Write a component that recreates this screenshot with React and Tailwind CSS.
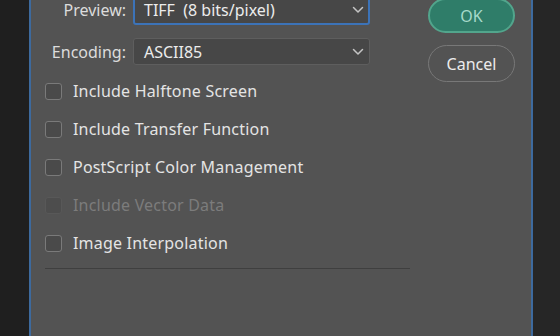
import React from 'react';

const Chevron = ({ className = '' }) => (
  <svg width="12" height="8" viewBox="0 0 12 8" fill="none" className={className}>
    <path d="M1.5 1.5 L6 6 L10.5 1.5" stroke="#c4c4c4" strokeWidth="1.5" strokeLinecap="round" strokeLinejoin="round" />
  </svg>
);

const Check = ({ label, disabled }) => (
  <div className="flex items-center h-[38px]">
    <span
      className={`w-[17px] h-[17px] rounded-[3px] border bg-[#4a4a4a] ${
        disabled ? 'border-[#5c5c5c] opacity-60' : 'border-[#7a7a7a]'
      }`}
    />
    <span className={`ml-[11px] text-[16px] tracking-[0.2px] ${disabled ? 'text-[#7c7c7c]' : 'text-[#e4e4e4]'}`}>
      {label}
    </span>
  </div>
);

export default function App() {
  return (
    <div
      className="w-[560px] h-[336px] overflow-hidden bg-[#262626] flex"
      style={{ fontFamily: '"Noto Sans", "Open Sans", sans-serif' }}
    >
      <div className="w-[29px] bg-[#1f1f1f]" />
      <div className="w-[504px] h-full bg-[#535353] border-x-2 border-[#3d6a9e] flex">
        <div className="w-[380px] pl-[13px]">
          <div className="flex items-center mt-[-5px] h-[30px]">
            <span className="w-[82px] text-right text-[16px] text-[#dcdcdc]">Preview:</span>
            <div className="ml-[7px] w-[237px] h-[30px] rounded-[3px] border-2 border-[#3c73b8] bg-[#474747] flex items-center justify-between pl-[9px] pr-[4px]">
              <span className="text-[16px] text-[#ececec]">TIFF&nbsp;&nbsp;(8 bits/pixel)</span>
              <Chevron />
            </div>
          </div>
          <div className="flex items-center mt-[13px] h-[27px]">
            <span className="w-[82px] text-right text-[16px] text-[#dcdcdc]">Encoding:</span>
            <div className="ml-[7px] w-[237px] h-[27px] rounded-[3px] border border-[#5e5e5e] bg-[#474747] flex items-center justify-between pl-[10px] pr-[5px]">
              <span className="text-[16px] text-[#ececec]">ASCII85</span>
              <Chevron />
            </div>
          </div>
          <div className="mt-[7px] pl-[1px]">
            <Check label="Include Halftone Screen" />
            <Check label="Include Transfer Function" />
            <Check label="PostScript Color Management" />
            <Check label="Include Vector Data" disabled />
            <Check label="Image Interpolation" />
          </div>
          <div className="mt-[6px] ml-[1px] w-[365px] h-px bg-[#3f3f3f]" />
        </div>
        <div className="ml-[17px] flex flex-col">
          <button className="mt-[-2px] w-[87px] h-[35px] rounded-full bg-[#2f7d69] border-2 border-[#52a58c] text-[16px] text-[#a6d9c9]">
            OK
          </button>
          <button className="mt-[12px] w-[87px] h-[37px] rounded-full border border-[#787878] text-[16px] text-[#ececec]">
            Cancel
          </button>
        </div>
      </div>
    </div>
  );
}
